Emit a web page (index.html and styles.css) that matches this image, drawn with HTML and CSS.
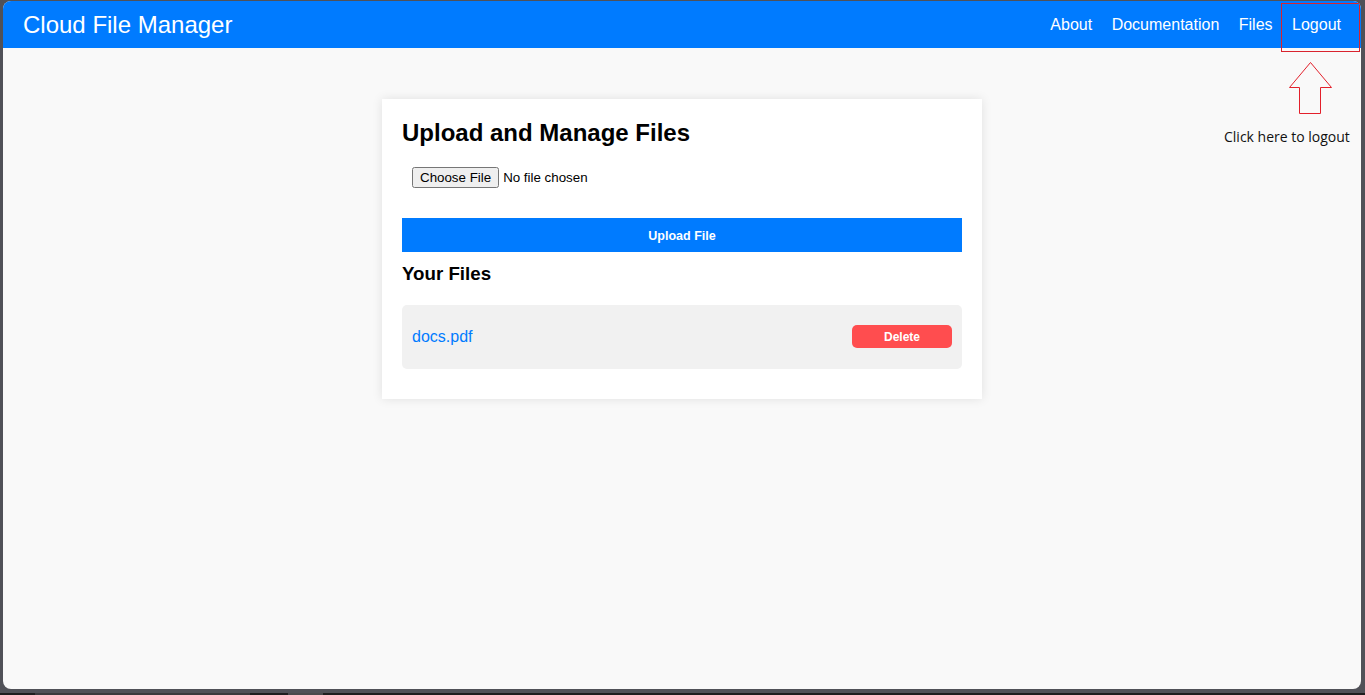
FILE: index.html
```html
<!DOCTYPE html>
<html lang="en">
<head>
<meta charset="utf-8">
<title>Cloud File Manager</title>
<link rel="stylesheet" href="styles.css">
</head>
<body>
<div class="window">
  <nav class="navbar">
    <div class="brand">Cloud File Manager</div>
    <div class="links">
      <a href="#">About</a>
      <a href="#">Documentation</a>
      <a href="#">Files</a>
      <a href="#">Logout</a>
    </div>
  </nav>

  <main class="card">
    <h2 class="title">Upload and Manage Files</h2>
    <input class="file-input" type="file">
    <button class="upload-btn">Upload File</button>
    <h3 class="subtitle">Your Files</h3>
    <ul class="file-list">
      <li class="file-item">
        <a href="#" class="file-link">docs.pdf</a>
        <button class="delete-btn">Delete</button>
      </li>
    </ul>
  </main>

  <div class="note-box"></div>
  <svg class="note-arrow" width="56" height="62" viewBox="0 0 56 62">
    <polygon points="27.5,6.5 6.5,31.5 16.5,31.5 16.5,57.5 37.5,57.5 37.5,31.5 48.5,31.5" fill="none" stroke="#e3202b" stroke-width="1"/>
  </svg>
  <div class="note-text">Click here to logout</div>
</div>
<div class="taskbar">
  <span class="seg seg-a"></span>
  <span class="seg seg-b"></span>
  <span class="seg seg-c"></span>
  <span class="seg seg-d"></span>
  <span class="seg seg-e"></span>
</div>
</body>
</html>
```

FILE: styles.css
```css
html, body {
  margin: 0;
  padding: 0;
}

body {
  background: #505158;
  height: 695px;
  overflow: hidden;
  font-family: "Liberation Sans", Arial, sans-serif;
}

.window {
  position: relative;
  margin: 1px 4px 0 3px;
  height: 688px;
  background: #f9f9f9;
  border-radius: 8px;
  overflow: hidden;
}

.navbar {
  display: flex;
  justify-content: space-between;
  align-items: center;
  height: 47px;
  padding: 0 20px;
  background: #007bff;
  color: #fff;
}

.brand {
  font-size: 24px;
}

.links {
  display: flex;
  gap: 19.5px;
}

.links a {
  color: #fff;
  text-decoration: none;
  font-size: 16px;
}

.card {
  width: 600px;
  box-sizing: border-box;
  margin: 51px auto 0;
  padding: 20px 20px 20px;
  background: #fff;
  box-shadow: 0 0 10px rgba(0, 0, 0, 0.1);
}

.title {
  margin: 0 0 10px;
  font-size: 24px;
  line-height: 28px;
  font-weight: bold;
}

.file-input {
  display: block;
  padding: 10px;
  margin: 0 0 20px;
  font-family: "Liberation Sans", Arial, sans-serif;
  font-size: 13.33px;
}

.upload-btn {
  display: block;
  width: 100%;
  height: 34px;
  padding: 2px 0 0;
  border: none;
  background: #007bff;
  color: #fff;
  font-family: "Liberation Sans", Arial, sans-serif;
  font-size: 12.5px;
  font-weight: bold;
}

.subtitle {
  margin: 11px 0 20px;
  font-size: 18.72px;
  line-height: 22px;
  font-weight: bold;
}

.file-list {
  list-style: none;
  margin: 0;
  padding: 0;
}

.file-item {
  display: flex;
  justify-content: space-between;
  align-items: center;
  padding: 20px 10px 21px;
  margin-bottom: 10px;
  background: #f1f1f1;
  border-radius: 5px;
}

.file-link {
  color: #007bff;
  text-decoration: none;
  font-size: 16px;
}

.delete-btn {
  width: 100px;
  height: 23px;
  border: none;
  border-radius: 5px;
  background: #ff4d4f;
  color: #fff;
  font-family: "Liberation Sans", Arial, sans-serif;
  font-size: 12px;
  font-weight: bold;
}

/* annotation overlay */
.note-box {
  position: absolute;
  left: 1278px;
  top: 2px;
  width: 77px;
  height: 47px;
  border: 1px solid #d9232e;
}

.note-arrow {
  position: absolute;
  left: 1280px;
  top: 55px;
}

.note-text {
  position: absolute;
  left: 1221px;
  top: 126px;
  font-family: "Open Sans", "Noto Sans", sans-serif;
  font-size: 14px;
  color: #111;
  white-space: nowrap;
}

.taskbar {
  display: flex;
  height: 2px;
  margin-top: 4px;
  background: #1e1e1f;
}

.seg { display: block; height: 2px; }
.seg-a { width: 35px; }
.seg-b { width: 215px; background: #3a3a3d; }
.seg-c { width: 38px; }
.seg-d { width: 35px; background: #4a4a4d; }
.seg-e { flex: 1; }
```
